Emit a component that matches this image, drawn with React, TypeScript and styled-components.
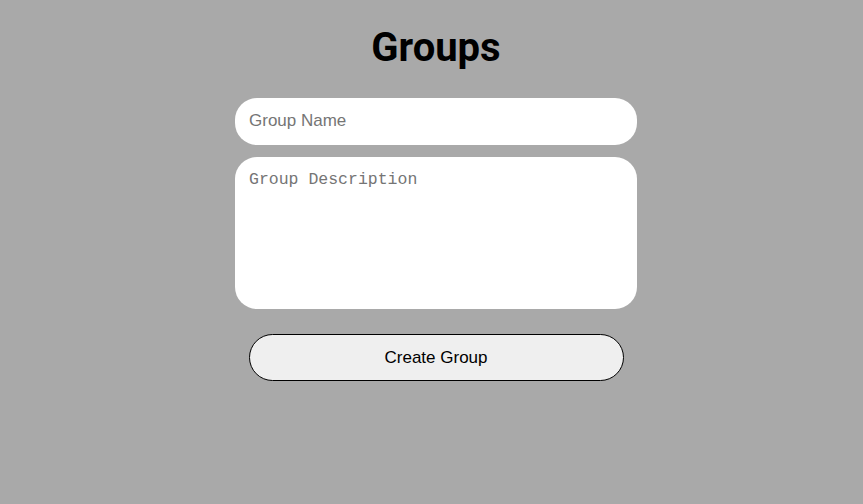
import React from 'react'
import styled, { createGlobalStyle } from 'styled-components'

const GlobalStyle = createGlobalStyle`
  html, body {
    margin: 0;
    padding: 0;
    background: #a9a9a9;
  }
`

const Page = styled.div`
  min-height: 504px;
  box-sizing: border-box;
  padding-left: 9px;
  display: flex;
  flex-direction: column;
  align-items: center;
  font-family: 'Liberation Sans', Arial, sans-serif;
`

const Title = styled.h1`
  margin: 22px 0 0;
  font-family: Roboto, sans-serif;
  font-weight: 700;
  font-size: 40px;
  line-height: 52px;
  color: #000;
`

const Form = styled.form`
  margin-top: 24px;
  display: flex;
  flex-direction: column;
  align-items: center;
  gap: 12px;
`

const NameInput = styled.input`
  box-sizing: border-box;
  width: 402px;
  height: 47px;
  border: none;
  border-radius: 22px;
  padding: 0 14px 2px;
  font-family: 'Liberation Sans', Arial, sans-serif;
  font-size: 17px;
  background: #fff;
  outline: none;
  &::placeholder { color: #757575; }
`

const DescInput = styled.textarea`
  box-sizing: border-box;
  width: 402px;
  height: 152px;
  border: none;
  border-radius: 22px;
  padding: 13px 14px;
  font-family: 'Liberation Mono', monospace;
  font-size: 16.5px;
  background: #fff;
  resize: none;
  outline: none;
  &::placeholder { color: #757575; }
`

const SubmitButton = styled.button`
  box-sizing: border-box;
  margin-top: 13px;
  width: 375px;
  height: 47px;
  border: 1px solid #000;
  border-radius: 24px;
  background: #efefef;
  color: #000;
  font-family: 'Liberation Sans', Arial, sans-serif;
  font-size: 17px;
  cursor: pointer;
`

export default function App() {
  return (
    <>
      <GlobalStyle />
      <Page>
        <Title>Groups</Title>
        <Form onSubmit={e => e.preventDefault()}>
          <NameInput placeholder="Group Name" />
          <DescInput placeholder="Group Description" />
          <SubmitButton type="submit">Create Group</SubmitButton>
        </Form>
      </Page>
    </>
  )
}
